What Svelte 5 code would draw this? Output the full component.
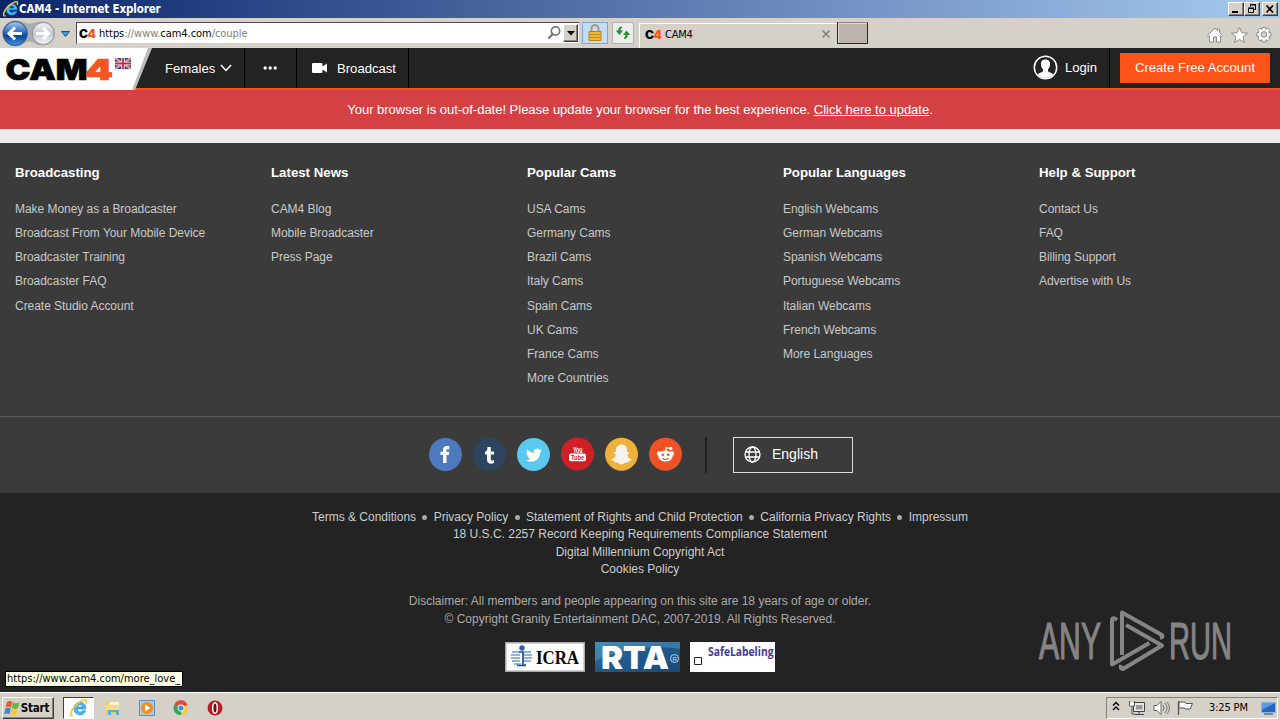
<script>
	const columns = [
		{
			title: 'Broadcasting',
			links: [
				'Make Money as a Broadcaster',
				'Broadcast From Your Mobile Device',
				'Broadcaster Training',
				'Broadcaster FAQ',
				'Create Studio Account'
			]
		},
		{ title: 'Latest News', links: ['CAM4 Blog', 'Mobile Broadcaster', 'Press Page'] },
		{
			title: 'Popular Cams',
			links: [
				'USA Cams',
				'Germany Cams',
				'Brazil Cams',
				'Italy Cams',
				'Spain Cams',
				'UK Cams',
				'France Cams',
				'More Countries'
			]
		},
		{
			title: 'Popular Languages',
			links: [
				'English Webcams',
				'German Webcams',
				'Spanish Webcams',
				'Portuguese Webcams',
				'Italian Webcams',
				'French Webcams',
				'More Languages'
			]
		},
		{
			title: 'Help & Support',
			links: ['Contact Us', 'FAQ', 'Billing Support', 'Advertise with Us']
		}
	];

	const legal = [
		'Terms & Conditions',
		'Privacy Policy',
		'Statement of Rights and Child Protection',
		'California Privacy Rights',
		'Impressum'
	];
</script>

{#snippet ieLogo()}
	<path d="M15 9.800H7.200c.1 1.700 1.100 2.800 2.600 2.800 1.100 0 1.800-.4 2.300-1.200h2.600c-.7 2.300-2.600 3.600-4.900 3.600-3.300 0-5.300-2.200-5.300-5.500s2-5.600 5.300-5.600c3.400 0 5.300 2.300 5.200 5.900zM7.300 8.100h4.900c-.2-1.400-1.100-2.200-2.400-2.200s-2.200.8-2.500 2.200z" fill="#4cb8f2" stroke="#2b8fd6" stroke-width=".7" />
	<path d="M3.600 15.600c-3.600 1.700-2.300-4.300 2.500-9 4-4 8.700-6 9.400-4.300.3.700 0 1.700-.5 2.700" fill="none" stroke="#f5c531" stroke-width="1.400" />
{/snippet}

<div class="screen">
	<header class="titlebar">
		<svg class="ie" width="17" height="18" viewBox="0 0 17 18">{@render ieLogo()}</svg>
		<span class="title">CAM4 - Internet Explorer</span>
		<div class="window-buttons">
			<button aria-label="Minimize"><svg width="14" height="12"><path d="M3 9h6" stroke="#000" stroke-width="2" /></svg></button>
			<button aria-label="Restore"><svg width="14" height="12"><path d="M5.500 4V1.500h5v5H9M5 2h6M3.500 5.500h5v4h-5zM3 5h6" fill="none" stroke="#000" /></svg></button>
			<button class="close" aria-label="Close"><svg width="14" height="12"><path d="M3.500 2.500l6.500 7M10 2.500l-6.500 7" stroke="#000" stroke-width="1.700" /></svg></button>
		</div>
	</header>

	<div class="toolbar">
		<svg class="history" width="76" height="30" viewBox="0 18 76 30">
			<defs>
				<linearGradient id="back" x2="0" y2="1">
					<stop offset="0" stop-color="#a4c8ee" />
					<stop offset=".45" stop-color="#2f6fc0" />
					<stop offset=".6" stop-color="#0b4396" />
					<stop offset="1" stop-color="#3d9be6" />
				</linearGradient>
				<linearGradient id="forward" x2="0" y2="1">
					<stop offset="0" stop-color="#f4f6f8" />
					<stop offset=".5" stop-color="#c3c8cf" />
					<stop offset="1" stop-color="#f4f6f8" />
				</linearGradient>
			</defs>
			<path d="M15 20.500c8 0 9 3 14 3s7-2 14-2a12 12 0 010 24c-7 0-9-4-14-4s-6 5-14 5a13 13 0 010-26z" fill="#a9acb0" />
			<circle cx="15.300" cy="33.500" r="12" fill="url(#back)" stroke="#28508c" />
			<circle cx="43.300" cy="33.500" r="11" fill="url(#forward)" stroke="#8c949e" />
			<path d="M22 33.500H10M15 27.500l-6 6 6 6" fill="none" stroke="#fff" stroke-width="3" />
			<path d="M36 33.500h12M43 28l5.500 5.500L43 39" fill="none" stroke="#fff" stroke-width="3" />
			<path d="M61.500 31.500h8l-4 5z" fill="#4d9bd8" stroke="#234a75" />
		</svg>
		<div class="address">
			<span class="favicon">C<b>4</b></span>
			<span class="url">https<i>://www.</i>cam4.com<i>/couple</i></span>
			<svg class="search" width="15" height="16" viewBox="0 0 15 16"><circle cx="8.500" cy="6" r="4.200" fill="none" stroke="#777" stroke-width="1.700" /><path d="M5.500 9L1.500 13.500" stroke="#777" stroke-width="2.400" /></svg>
			<button class="drop" aria-label="Show address bar list"><svg width="8" height="5"><path d="M0 0h8L4 4.500z" /></svg></button>
		</div>
		<div class="lock">
			<svg width="16" height="18" viewBox="0 0 16 18"><path d="M4.500 8V4.500a3.500 3.500 0 017 0V8" fill="none" stroke="#a79b75" stroke-width="2" /><path d="M2 7.500h12v9H2z" fill="#eeb832" stroke="#b6811b" /><path d="M2.500 10.500h11M2.500 13.500h11" stroke="#c48b1d" /></svg>
		</div>
		<div class="refresh">
			<svg width="16" height="16" viewBox="0 0 16 16" fill="#2f8d35"><path d="M7 1.500C4.500 1.500 3.200 3 3.200 5.500H.7L4.500 10l3.500-4.500H5.500C5.500 4 6 3.200 7 3zM9 14c2.500 0 3.800-1.500 3.800-4h2.500l-3.800-4.500L8 10h2.500c0 1.500-.5 2.300-1.500 2.500z" /></svg>
		</div>
		<div class="tab">
			<span class="favicon">C<b>4</b></span>
			<span class="tab-name">CAM4</span>
			<svg width="8" height="8"><path d="M.5.5l7 7M7.500.5l-7 7" stroke="#888480" stroke-width="1.700" /></svg>
		</div>
		<div class="new-tab"></div>
		<svg class="tools" width="68" height="20" viewBox="0 0 68 20" fill="#fff" stroke="#8d8d8d">
			<path d="M1.500 10.500L9 3l2.500 2.500V4h2v3.500l3 3-1 1-1-.8V17h-4v-5h-3v5h-4v-6.300l-1 .8z" />
			<path d="M33.500 2.500l2.200 5.200 5.800.4-4.500 3.700 1.500 5.700-5-3.100-5 3.100 1.500-5.700-4.500-3.700 5.800-.4z" />
			<path d="M56.500 2.500h3l.4 2 1.800-1.300 2.200 2-1.200 2 2.300.6v3.300l-2.300.6 1.200 2-2.200 2.100-1.800-1.200-.4 2.400h-3l-.4-2.400-2 1.200-2.200-2.100 1.200-2-2.300-.6V7.800l2.300-.6-1.200-2 2.200-2 2 1.300z" />
			<circle cx="58" cy="9.400" r="2.800" fill="#d5d0c8" />
		</svg>
	</div>

	<nav class="site-nav">
		<svg class="logo" width="152" height="42" viewBox="0 48 152 42">
			<path d="M0 48h152l-17 42H0z" fill="#bcbcbc" />
			<path d="M0 48h148l-16 42H0z" fill="#fff" />
			<text x="5.500" y="80" textLength="82" lengthAdjust="spacingAndGlyphs">CAM</text>
			<text class="four" x="85" y="80" textLength="28" lengthAdjust="spacingAndGlyphs">4</text>
			<g>
				<path d="M115 58h16v11h-16z" fill="#35407f" />
				<path d="M115 58l16 11M131 58l-16 11" stroke="#e8e4f0" stroke-width="2" />
				<path d="M115 58l16 11M131 58l-16 11" stroke="#d34" stroke-width=".7" />
				<path d="M123 58v11M115 63.500h16" stroke="#fff" stroke-width="3.400" />
				<path d="M123 58v11M115 63.500h16" stroke="#c8283c" stroke-width="1.800" />
			</g>
		</svg>
		<a class="females" href="#females">Females
			<svg width="12" height="8"><path d="M1 1l5 5.500L11 1" fill="none" stroke="#fff" stroke-width="1.500" /></svg>
		</a>
		<a class="more" href="#more" aria-label="More"><svg width="15" height="4"><circle cx="2.200" cy="2" r="1.700" /><circle cx="7.200" cy="2" r="1.700" /><circle cx="12.200" cy="2" r="1.700" /></svg></a>
		<a class="broadcast" href="#broadcast"><svg width="16" height="10"><path d="M1 0h8.500q1 0 1 1v2.500L15 .5v9l-4.500-3V9q0 1-1 1H1Q0 10 0 9V1q0-1 1-1z" /></svg>Broadcast</a>
		<a class="login" href="#login">
			<svg width="25" height="25" viewBox="0 0 25 25"><circle cx="12.500" cy="12.500" r="11.200" fill="none" stroke="#fff" stroke-width="1.500" /><path d="M12.500 4.500c3.300 0 4.800 2.200 4.500 5.300-.2 2.200-1 3.500-2 4.500v1.800c.5 1.500 3.500 1.600 5.300 3.100-4 5-11.600 5-15.600 0 1.800-1.500 4.800-1.600 5.300-3.100v-1.800c-1-1-1.800-2.300-2-4.500-.3-3.100 1.200-5.300 4.500-5.300z" /></svg>
			Login
		</a>
		<div class="signup"><a href="#signup">Create Free Account</a></div>
	</nav>

	<div class="alert"><p>Your browser is out-of-date! Please update your browser for the best experience. <a href="#update">Click here to update</a>.</p></div>

	<footer>
		<div class="columns">
			{#each columns as column}
				<section>
					<h4>{column.title}</h4>
					<ul>
						{#each column.links as link}
							<li><a href="#link">{link}</a></li>
						{/each}
					</ul>
				</section>
			{/each}
		</div>

		<div class="social">
			<svg viewBox="0 0 33 33"><circle cx="16.500" cy="16.500" r="16.500" fill="#4e79bd" /><path d="M14 25v-8h-2.500v-3.200H14V12c0-2.900 1.600-4 4-4h2.300v3.200h-1.500c-1.100 0-1.300.5-1.300 1.300v1.300h2.800L20 17h-2.500v8z" fill="#fff" /></svg>
			<svg viewBox="0 0 33 33"><circle cx="16.500" cy="16.500" r="16.500" fill="#2d4560" /><path d="M14.500 9h3.300v4.500H21v3h-3.200V21c0 2 1.500 1.700 3.200 1v3c-3 1.500-7 .8-7-3.200v-5.300h-2v-2.600c1.800-.6 2.400-1.900 2.500-4.900z" fill="#fff" /></svg>
			<svg viewBox="0 0 33 33"><circle cx="16.500" cy="16.500" r="16.500" fill="#5bc8ed" /><path d="M25 12.200c-.6.300-1.200.5-1.900.5.7-.4 1.200-1 1.400-1.800-.6.400-1.300.6-2.100.8a3.300 3.300 0 00-5.600 3c-2.700-.1-5.200-1.400-6.800-3.500-.9 1.500-.4 3.400 1 4.400-.5 0-1-.2-1.500-.4 0 1.600 1.100 2.900 2.600 3.200-.5.100-1 .2-1.500.1.400 1.300 1.600 2.200 3.100 2.300-1.400 1.100-3.100 1.500-4.900 1.300 7 4.300 14.500-.4 14.500-8 .7-.5 1.300-1.100 1.700-1.900z" fill="#fff" /></svg>
			<svg viewBox="0 0 33 33"><circle cx="16.500" cy="16" r="16.500" fill="#cf2027" /><rect x="8" y="15.500" width="17" height="7.700" rx="2" fill="#fff" /><text x="12" y="14.500" font-size="8.500" textLength="9.500" lengthAdjust="spacingAndGlyphs" fill="#fff">You</text><text x="10" y="22" font-size="7.500" textLength="13" lengthAdjust="spacingAndGlyphs" fill="#cf2027">Tube</text></svg>
			<svg viewBox="0 0 33 33"><circle cx="16.500" cy="16.200" r="16.500" fill="#eeb23c" /><path transform="translate(-1.300 -1) scale(1.080)" d="M16.500 7c3.500 0 5.200 2.300 5.200 5.200v2c1-.4 1.900-.2 1.900.5 0 .9-1.800 1-1.800 1.900 0 1.500 2 3.500 4 4.100.3 1-1.800 1.400-2.300 1.600-.4.400-.1 1.200-.7 1.300-1 .1-1.900-.3-3 .3-1 .7-1.800 1.600-3.300 1.600s-2.300-.9-3.300-1.600c-1.100-.6-2-.2-3-.3-.6-.1-.3-.9-.7-1.300-.5-.2-2.600-.6-2.300-1.600 2-.6 4-2.600 4-4.100 0-.9-1.800-1-1.800-1.900 0-.7.900-.9 1.900-.5v-2C11.300 9.300 13 7 16.500 7z" fill="#f6f1ea" /></svg>
			<svg viewBox="0 0 33 33"><circle cx="16.500" cy="16.200" r="16.500" fill="#ee5327" /><ellipse cx="16.500" cy="18" rx="7.200" ry="5.500" fill="#fff" /><circle cx="10.200" cy="15.500" r="2.300" fill="#fff" /><circle cx="22.800" cy="15.500" r="2.300" fill="#fff" /><path d="M16.500 13l.8-3.300 4.200 1" fill="none" stroke="#fff" stroke-width="1.200" /><circle cx="21.800" cy="10.500" r="1.700" fill="#fff" /><circle cx="13.800" cy="16.800" r="1.300" fill="#ee5327" /><circle cx="19.200" cy="16.800" r="1.300" fill="#ee5327" /><path d="M13.500 20.500q3 2 6 0" fill="none" stroke="#a5371b" /></svg>
			<span class="divider"></span>
			<a class="language" href="#language"><svg class="globe" width="17" height="17" viewBox="0 0 17 17"><circle cx="8.500" cy="8.500" r="7.500" /><ellipse cx="8.500" cy="8.500" rx="3.500" ry="7.500" /><path d="M1.500 6h14M1.500 11h14" /></svg>English</a>
		</div>

		<div class="legal">
			<p>{#each legal as item, i}{#if i > 0}<span class="dot"></span>{/if}<a href="#legal">{item}</a>{/each}</p>
			<p><a href="#legal">18 U.S.C. 2257 Record Keeping Requirements Compliance Statement</a></p>
			<p><a href="#legal">Digital Millennium Copyright Act</a></p>
			<p><a href="#legal">Cookies Policy</a></p>
			<div class="disclaimer">
				<p>Disclaimer: All members and people appearing on this site are 18 years of age or older.</p>
				<p>© Copyright Granity Entertainment DAC, 2007-2019. All Rights Reserved.</p>
			</div>
			<div class="badges">
				<svg width="80" height="30"><path d="M0 0h80v30H0z" fill="#aaa" /><path d="M1.500 1.500h77v27h-77z" fill="#fff" /><circle cx="17" cy="6" r="2.700" fill="#2b62a8" /><path d="M7 10h8M6 13h9M6 16h9M7 19h8M9 22h7M18 10h8M18 13h9M18 16h9M18 19h8" stroke="#6d9ccc" stroke-width="1.500" /><path d="M14 10h4v13h3M12 23.500h9" fill="none" stroke="#234f9a" stroke-width="1.700" /><text class="icra" x="31" y="22" textLength="43" lengthAdjust="spacingAndGlyphs">ICRA</text></svg>
				<svg width="85" height="30"><defs><linearGradient id="rta" x2="1" y2="1"><stop stop-color="#397dac" /><stop offset=".45" stop-color="#205b8e" /><stop offset="1" stop-color="#174a7c" /></linearGradient></defs><path d="M0 0h85v30H0z" fill="url(#rta)" /><path d="M0 0h85v7Q40 0 0 19z" fill="#5795bd" opacity=".5" /><text class="rta" x="6" y="27" textLength="68" lengthAdjust="spacingAndGlyphs">RTA</text><circle cx="79.500" cy="16.500" r="4" fill="none" stroke="#b7d6e8" /><text x="77.500" y="19" font-size="6" fill="#d7e8f3">R</text></svg>
				<svg width="85" height="30"><path d="M0 0h85v30H0z" fill="#fff" /><path d="M4.500 15.500h7v7h-7z" fill="none" stroke="#222" /><text class="safe" x="18" y="14" textLength="65.500" lengthAdjust="spacingAndGlyphs">SafeLabeling</text></svg>
			</div>
		</div>
	</footer>

	<svg class="watermark" width="194" height="64" viewBox="1039 609 194 64">
		<g class="letters">
			<text x="1039" y="659" textLength="62" lengthAdjust="spacingAndGlyphs">ANY</text>
			<text x="1169" y="659" textLength="63" lengthAdjust="spacingAndGlyphs">RUN</text>
		</g>
		<g fill="none" stroke="#858585" stroke-width="4" stroke-linejoin="round">
			<path d="M1117 620q-5-4-5 1v43.500l37.500-21.500" />
			<path d="M1122 655v-42.500l40 22.500q1.500 2-2 3" />
			<path d="M1126 625l36 20.500-39 23.500q-3 0-2-4" />
		</g>
	</svg>

	<div class="status">https://www.cam4.com/more_love_</div>

	<div class="taskbar">
		<button class="start"><svg width="16" height="16" viewBox="0 0 16 16"><path d="M3 2q3-2 5.500 0L7 7.500Q4 6 1.500 7.500z" fill="#e95b2c" /><path d="M9.200 2.200q3 2 6.500 0L14 8q-3 2-6.200 0z" fill="#6bb544" /><path d="M1.300 8.700q3-2 5.500 0L5.300 14.500q-2-2-5.300 0z" fill="#3f89d0" /><path d="M7.500 9q3 2 6.200 0L12.300 14.700q-3 2-6 0z" fill="#f7c636" /></svg>Start</button>
		<div class="task active"><svg width="19" height="19" viewBox="0 0 17 17">{@render ieLogo()}</svg></div>
		<svg class="folder" width="18" height="18" viewBox="0 0 18 18"><path d="M2 2h5l1 2h7v11H2z" fill="#e9cb6c" /><path d="M5 3h10v4H5z" fill="#fff4bf" /><path d="M2 6h13v5H2z" fill="#f2dc8b" /><path d="M4 16V11h11v5h-3v-3H7v3z" fill="#5caed8" /></svg>
		<svg class="player" width="16" height="16"><path d="M.5.5h15v15H.5z" fill="#a9cbe8" stroke="#568fc0" /><circle cx="8" cy="8" r="6" fill="#f38b1f" /><path d="M6 4.500v7l5.500-3.500z" fill="#fff" /></svg>
		<svg class="chrome" width="16" height="16" viewBox="0 0 16 16"><path d="M8 8L1.500 4.500A7 7 0 0114.500 5z" fill="#dd4b3e" /><path d="M8 8l6.500-3A7 7 0 018 15z" fill="#f7cb3a" /><path d="M8 8v7A7 7 0 011.500 4.500z" fill="#3ba158" /><circle cx="8" cy="8" r="3.400" fill="#fff" /><circle cx="8" cy="8" r="2.600" fill="#4588e5" /></svg>
		<svg class="opera" width="16" height="16"><circle cx="8" cy="8" r="7.500" fill="#b61e22" /><ellipse cx="8" cy="8" rx="2.300" ry="5.300" fill="#7c090d" stroke="#fff" stroke-width="1.500" /></svg>
		<div class="tray">
			<svg width="90" height="20" viewBox="0 0 90 20" fill="none">
				<path d="M6 7.500l3-3 3 3M6 12l3-3 3 3" stroke="#000" stroke-width="1.400" />
				<path d="M26.500 4.500h11v9h-11z" fill="#e5e5e5" stroke="#444" /><path d="M28 16.500h9M32 14v2" stroke="#444" /><path d="M29 7h6.500v4.500H29z" fill="#999" /><path d="M22.500 3v5h5V3M25 8v8h3" stroke="#555" /><path d="M23 4.500h4v3h-4z" fill="#fff" />
				<path d="M47 7.500h3l4-4v13l-4-4h-3z" fill="#fff" stroke="#666" /><path d="M56 7q2 3 0 6M58 5q4 5 0 10M60 4q5 6 0 12" stroke="#777" />
				<path d="M71.500 3v14" stroke="#555" stroke-width="1.300" /><path d="M72 4h6l1 1.500h6.500L83 11h-5l-1-1h-5z" fill="#fff" stroke="#555" />
			</svg>
			<span class="clock">3:25 PM</span>
			<svg class="desktop" width="15" height="13"><path d="M.5.500h14v10H.5z" fill="#2865bd" stroke="#8eb5e1" /><path d="M1 1h13L1 8z" fill="#5d9ce2" /><path d="M3 11.500h9v1H3z" fill="#26364d" /></svg>
		</div>
	</div>
</div>

<style>
	:global(body) {
		margin: 0;
		background: #232323;
	}
	.screen {
		position: relative;
		width: 1280px;
		height: 720px;
		overflow: hidden;
		display: flex;
		flex-direction: column;
		font-family: 'Liberation Sans', Arial, sans-serif;
	}
	.screen * {
		box-sizing: border-box;
	}
	a {
		color: inherit;
		text-decoration: none;
	}
	svg {
		display: block;
		flex: none;
		overflow: visible;
	}
	p, h4, ul {
		margin: 0;
		padding: 0;
	}
	button {
		padding: 0;
		border: 1px solid;
		border-color: #fff #404040 #404040 #fff;
		background: #d5d0c8;
		box-shadow: inset -1px -1px #858078;
		display: flex;
		align-items: center;
		justify-content: center;
	}

	.titlebar {
		flex: none;
		height: 18px;
		display: flex;
		align-items: center;
		padding: 0 2px 0 2px;
		background: linear-gradient(90deg, #0b256b, #a6caf0);
		color: #fff;
	}
	.title {
		font: bold 11.500px/17px 'DejaVu Sans Condensed', sans-serif;
		letter-spacing: -0.14px;
	}
	.window-buttons {
		display: flex;
		margin-left: auto;
	}
	.window-buttons button {
		width: 16px;
		height: 14px;
	}
	.window-buttons .close {
		margin-left: 2px;
	}

	.toolbar {
		flex: none;
		height: 30px;
		display: flex;
		align-items: center;
		background: #d5d0c8;
		font: 11px 'DejaVu Sans Condensed', sans-serif;
	}
	.address {
		width: 504px;
		height: 22px;
		display: flex;
		align-items: center;
		padding: 0 1px 0 2px;
		background: #fff;
		border: 1px solid #504c50;
		border-right-color: #d5d0c8;
		border-bottom-color: #d5d0c8;
	}
	.favicon {
		width: 20px;
		font: 900 12px Inter, sans-serif;
		letter-spacing: -0.5px;
	}
	.favicon b {
		color: #f4561f;
		font-weight: 900;
	}
	.url {
		padding-top: 1px;
		letter-spacing: -0.05px;
	}
	.url i {
		font-style: normal;
		color: #808080;
	}
	.search {
		margin: 0 1px 0 auto;
	}
	.drop {
		width: 15px;
		height: 18px;
	}
	.lock, .refresh {
		height: 22px;
		display: flex;
		align-items: center;
		justify-content: center;
	}
	.lock {
		width: 26px;
		margin-left: 2px;
		background: #c4dcf6;
		border: 1px solid #78a8de;
	}
	.refresh {
		width: 22px;
		margin-left: 4px;
		background: #eceeec;
		border: 1px solid #b5b3ad;
		border-radius: 2px;
	}
	.tab {
		width: 199px;
		height: 25px;
		margin-left: 5px;
		padding: 0 8px 4px 5px;
		align-self: flex-end;
		display: flex;
		align-items: center;
		border-top: 1px solid #fff;
		border-left: 1px solid #fff;
	}
	.tab svg {
		margin-left: auto;
	}
	.tab-name {
		letter-spacing: -0.2px;
	}
	.new-tab {
		width: 31px;
		height: 22px;
		margin-left: -1px;
		background: #bcb4ac;
		border: 1px solid #282828;
		border-top-color: #8c8880;
		box-shadow: inset 1px 1px #ddd8d0;
	}
	.tools {
		margin: 3px 6px 0 auto;
	}

	.site-nav {
		flex: none;
		height: 42px;
		display: flex;
		background: #232323;
		border-bottom: 2px solid #f4511e;
		color: #fff;
		font-size: 13.100px;
	}
	.site-nav a {
		display: flex;
		align-items: center;
	}
	.site-nav svg {
		fill: #fff;
	}
	.logo text {
		font: 900 29px Inter, sans-serif;
		fill: #000;
		stroke: #000;
		stroke-width: 0.7px;
	}
	.logo .four {
		fill: #f4561f;
		stroke: #f4561f;
	}
	.females, .more, .broadcast {
		height: 40px;
		border-right: 1px solid #000;
	}
	.females {
		width: 93px;
		padding-left: 13px;
		gap: 5px;
	}
	.more {
		width: 52px;
		justify-content: center;
	}
	.broadcast {
		width: 112px;
		padding-left: 15px;
		gap: 9px;
	}
	.login {
		width: 76px;
		height: 38px;
		margin-left: auto;
		gap: 7px;
	}
	.signup {
		height: 40px;
		width: 171px;
		padding: 5px 10px;
		border-left: 1px solid #000;
	}
	.signup a {
		height: 30px;
		justify-content: center;
		padding-bottom: 1px;
		background: #ff5419;
		border-radius: 1px;
	}

	.alert {
		flex: none;
		height: 53px;
		background: #ececec;
	}
	.alert p {
		height: 39px;
		line-height: 39px;
		text-align: center;
		background: #d34145;
		color: #fff;
		font-size: 13px;
		letter-spacing: -0.015px;
	}
	.alert a {
		text-decoration: underline;
	}

	footer {
		flex: 1;
		background: #232323;
	}
	.columns {
		height: 274px;
		display: grid;
		grid-template-columns: repeat(5, 256px);
		padding: 20px 0 0 15px;
		background: #3b3b3b;
		border-bottom: 1px solid #5a5a5a;
	}
	h4 {
		height: 33.700px;
		color: #fff;
		font-size: 13.250px;
		line-height: 19px;
	}
	ul {
		list-style: none;
		color: #c8c8c8;
		font-size: 12px;
		line-height: 24.250px;
		letter-spacing: -0.04px;
	}
	.social {
		height: 76px;
		display: flex;
		align-items: center;
		gap: 11px;
		padding: 0 0 2px 429px;
		background: #3b3b3b;
	}
	.social > svg {
		width: 33px;
		height: 33px;
	}
	.social text {
		font-family: 'Liberation Sans Narrow', 'Liberation Sans', sans-serif;
		font-weight: bold;
	}
	.divider {
		width: 2px;
		height: 36px;
		margin: 2px 15px 0 12px;
		background: #222;
	}
	.language {
		width: 120px;
		height: 36px;
		margin-top: 2px;
		padding: 0 0 2px 10px;
		display: flex;
		align-items: center;
		gap: 11px;
		border: 1px solid #ddd;
		color: #fff;
		font-size: 14px;
	}
	.globe {
		fill: none;
		stroke: #fff;
		stroke-width: 1.300;
	}

	.legal {
		padding-top: 16px;
		color: #ccc;
		font-size: 12px;
		line-height: 17.330px;
		text-align: center;
	}
	.dot {
		display: inline-block;
		width: 5px;
		height: 5px;
		margin: 0 6.300px;
		border-radius: 50%;
		background: #aaa;
		vertical-align: 1px;
	}
	.disclaimer {
		margin-top: 15px;
		color: #aaa;
		line-height: 17.500px;
	}
	.badges {
		display: flex;
		justify-content: center;
		gap: 10px;
		margin-top: 14px;
	}
	.icra {
		font: bold 18px 'Liberation Serif', serif;
	}
	.rta {
		font: 900 32px Inter, sans-serif;
		fill: #fff;
	}
	.safe {
		font: bold 12px 'Open Sans', sans-serif;
		fill: #46389a;
	}

	.watermark {
		position: absolute;
		left: 1039px;
		top: 609px;
	}
	.letters text {
		font: 52px 'Liberation Sans Narrow', 'Liberation Sans', sans-serif;
		fill: #858585;
		stroke: #858585;
		stroke-width: 1.200px;
	}
	.status {
		position: absolute;
		left: 5px;
		top: 671px;
		width: 178px;
		height: 16px;
		padding-left: 1px;
		border: 1px solid #000;
		background: #ffffe1;
		font: 11px/14px 'DejaVu Sans Condensed', sans-serif;
		white-space: nowrap;
	}

	.taskbar {
		flex: none;
		height: 28px;
		display: flex;
		align-items: center;
		padding: 2px 2px 0;
		background: #d5d0c8;
		border-top: 1px solid #fff;
	}
	.start {
		width: 52px;
		height: 22px;
		padding-right: 3px;
		gap: 1px;
		font: bold 11.500px 'DejaVu Sans Condensed', sans-serif;
		letter-spacing: -0.2px;
		color: #000;
	}
	.task {
		width: 31px;
		height: 22px;
		margin-left: 9px;
		display: flex;
		align-items: center;
		justify-content: center;
		background: #fff;
		border: 1px solid;
		border-color: #404040 #fff #fff #404040;
	}
	.folder {
		margin-left: 10px;
	}
	.player {
		margin-left: 17px;
	}
	.chrome {
		margin-left: 18px;
	}
	.opera {
		margin-left: 18px;
	}
	.tray {
		width: 172px;
		height: 22px;
		margin-left: auto;
		display: flex;
		align-items: center;
		border: 1px solid;
		border-color: #858078 #fff #fff #858078;
		font: 11px 'DejaVu Sans Condensed', sans-serif;
	}
	.clock {
		margin-left: 12px;
		letter-spacing: -0.15px;
		white-space: nowrap;
	}
	.desktop {
		margin: 2px 1px 0 auto;
	}
</style>
